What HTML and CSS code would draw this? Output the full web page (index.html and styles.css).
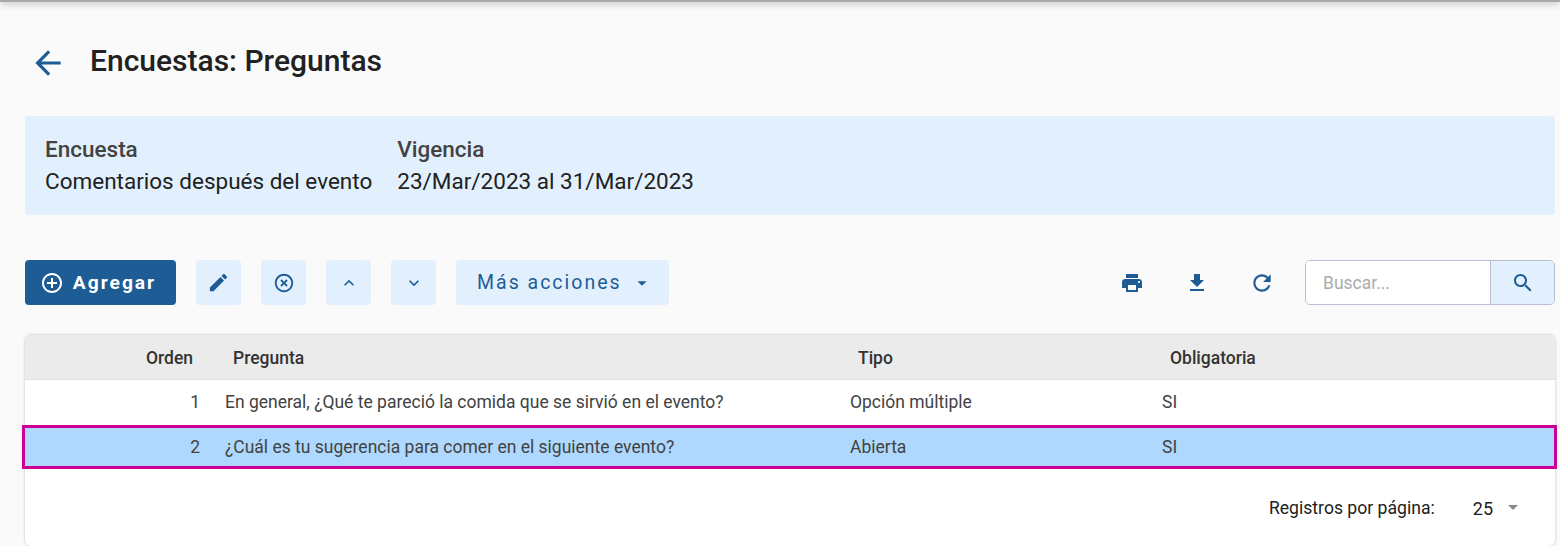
FILE: index.html
```html
<!DOCTYPE html>
<html lang="es">
<head>
<meta charset="utf-8">
<title>Encuestas: Preguntas</title>
<link rel="stylesheet" href="styles.css">
</head>
<body>
<div class="topbar"></div>
<main class="page">
  <header class="page-head">
    <svg class="back" viewBox="0 0 24 24"><path d="M20 11H7.83l5.59-5.59L12 4l-8 8 8 8 1.41-1.41L7.83 13H20v-2z"/></svg>
    <h1>Encuestas: Preguntas</h1>
  </header>
  <section class="info">
    <div class="info-col">
      <div class="info-label">Encuesta</div>
      <div class="info-value">Comentarios después del evento</div>
    </div>
    <div class="info-col">
      <div class="info-label">Vigencia</div>
      <div class="info-value">23/Mar/2023 al 31/Mar/2023</div>
    </div>
  </section>
  <section class="toolbar">
    <button class="btn btn-primary">
      <svg class="ic-add" viewBox="0 0 24 24"><path d="M13 7h-2v4H7v2h4v4h2v-4h4v-2h-4V7zm-1-5C6.48 2 2 6.48 2 12s4.48 10 10 10 10-4.48 10-10S17.52 2 12 2zm0 18c-4.41 0-8-3.59-8-8s3.59-8 8-8 8 3.59 8 8-3.59 8-8 8z"/></svg>
      Agregar
    </button>
    <button class="btn btn-icon"><svg class="ic-23" viewBox="0 0 24 24"><path d="M3 17.25V21h3.75L17.81 9.94l-3.75-3.75L3 17.25zM20.71 7.04c.39-.39.39-1.02 0-1.41l-2.34-2.34c-.39-.39-1.02-.39-1.41 0l-1.83 1.83 3.75 3.75 1.83-1.83z"/></svg></button>
    <button class="btn btn-icon"><svg class="ic-22" viewBox="0 0 24 24"><path d="M14.59 8L12 10.59 9.41 8 8 9.41 10.59 12 8 14.59 9.41 16 12 13.41 14.59 16 16 14.59 13.41 12 16 9.41 14.59 8zM12 2C6.47 2 2 6.47 2 12s4.47 10 10 10 10-4.47 10-10S17.53 2 12 2zm0 18c-4.41 0-8-3.59-8-8s3.59-8 8-8 8 3.59 8 8-3.59 8-8 8z"/></svg></button>
    <button class="btn btn-icon"><svg class="ic-20" viewBox="0 0 24 24"><path d="M12 8l-6 6 1.41 1.41L12 10.83l4.59 4.58L18 14z"/></svg></button>
    <button class="btn btn-icon"><svg class="ic-20" viewBox="0 0 24 24"><path d="M16.59 8.59L12 13.17 7.41 8.59 6 10l6 6 6-6z"/></svg></button>
    <button class="btn btn-more">
      <span class="btn-more-label">Más acciones</span>
      <svg class="ic-22" viewBox="0 0 24 24"><path d="M7 10l5 5 5-5z"/></svg>
    </button>
    <div class="toolbar-right">
      <div class="tools">
        <svg class="ic-24" viewBox="0 0 24 24"><path d="M19 8H5c-1.66 0-3 1.34-3 3v6h4v4h12v-4h4v-6c0-1.66-1.34-3-3-3zm-3 11H8v-5h8v5zm3-7c-.55 0-1-.45-1-1s.45-1 1-1 1 .45 1 1-.45 1-1 1zm-1-9H6v4h12V3z"/></svg>
        <svg class="ic-24" viewBox="0 0 24 24"><path d="M19 9h-4V3H9v6H5l7 7 7-7zM5 18v2h14v-2H5z"/></svg>
        <svg class="ic-refresh" viewBox="0 0 24 24"><path d="M17.65 6.35C16.2 4.9 14.21 4 12 4c-4.42 0-7.99 3.58-7.99 8s3.57 8 7.99 8c3.73 0 6.84-2.55 7.73-6h-2.08c-.82 2.33-3.04 4-5.65 4-3.31 0-6-2.69-6-6s2.69-6 6-6c1.66 0 3.14.69 4.22 1.78L13 11h7V4l-2.35 2.35z"/></svg>
      </div>
      <div class="search">
        <div class="search-input">Buscar...</div>
        <div class="search-btn"><svg class="ic-24" viewBox="0 0 24 24"><path d="M15.5 14h-.79l-.28-.27C15.41 12.59 16 11.11 16 9.5 16 5.91 13.09 3 9.5 3S3 5.91 3 9.5 5.91 16 9.5 16c1.61 0 3.09-.59 4.23-1.57l.27.28v.79l5 4.99L20.49 19l-4.99-5zm-6 0C7.01 14 5 11.99 5 9.5S7.01 5 9.5 5 14 7.01 14 9.5 11.99 14 9.5 14z"/></svg></div>
      </div>
    </div>
  </section>
  <section class="card">
    <div class="row row-head">
      <div class="cell num">Orden</div>
      <div class="cell">Pregunta</div>
      <div class="cell">Tipo</div>
      <div class="cell">Obligatoria</div>
    </div>
    <div class="row row-body row-first">
      <div class="cell num">1</div>
      <div class="cell">En general, ¿Qué te pareció la comida que se sirvió en el evento?</div>
      <div class="cell">Opción múltiple</div>
      <div class="cell">SI</div>
    </div>
    <div class="row row-body row-selected">
      <div class="cell num">2</div>
      <div class="cell">¿Cuál es tu sugerencia para comer en el siguiente evento?</div>
      <div class="cell">Abierta</div>
      <div class="cell">SI</div>
    </div>
    <footer class="pager">
      <span>Registros por página:</span>
      <span class="pager-size">25</span>
      <svg class="ic-24 pager-arrow" viewBox="0 0 24 24"><path d="M7 10l5 5 5-5z"/></svg>
    </footer>
  </section>
</main>
</body>
</html>
```

FILE: styles.css
```css
* { box-sizing: border-box; }
html, body { margin: 0; height: 546px; overflow: hidden; }
body {
  background: #fafafa;
  font-family: Roboto, "Liberation Sans", sans-serif;
  color: #212121;
}
svg { display: block; fill: currentColor; flex: none; }
.topbar {
  height: 2px;
  background: #a8a8a8;
  box-shadow: 0 1px 7px rgba(0, 0, 0, .5);
}
.page { padding: 0 5px 0 25px; }
.page-head {
  display: flex;
  align-items: center;
  height: 114px;
  padding-top: 8px;
}
.back {
  width: 38px;
  height: 38px;
  margin-left: 4px;
  margin-right: 23px;
  color: #1e5c96;
}
h1 {
  margin: 0 0 5px;
  font-size: 30px;
  font-weight: 500;
  line-height: 36px;
  color: #212121;
}
.info {
  display: flex;
  gap: 25px;
  height: 99px;
  padding: 17px 20px 0;
  background: #e2f0fe;
  border-radius: 4px;
  font-size: 22.5px;
  line-height: 32px;
}
.info-label { font-weight: 500; color: #424242; }
.info-value { color: #212121; }
.toolbar {
  display: flex;
  align-items: center;
  gap: 20px;
  height: 45px;
  margin-top: 45px;
}
.btn {
  display: flex;
  align-items: center;
  justify-content: center;
  height: 45px;
  padding: 0;
  border: 0;
  border-radius: 4px;
  font-family: inherit;
  font-size: 19.5px;
  line-height: 24px;
  letter-spacing: 2px;
  color: #1e5c96;
  background: #e2f0fe;
}
.btn-primary {
  width: 151px;
  gap: 9px;
  padding-right: 5px;
  font-size: 19.2px;
  font-weight: 700;
  background: #1e5c96;
  color: #fff;
}
.ic-add { width: 24px; height: 24px; }
.btn-icon { width: 45px; }
.btn-more {
  justify-content: flex-start;
  width: 213px;
  gap: 9px;
  padding-left: 21px;
  font-weight: 400;
}
.btn-more-label { padding-top: 1px; }
.ic-24 { width: 24px; height: 24px; }
.ic-23 { width: 23px; height: 23px; }
.ic-22 { width: 22px; height: 22px; }
.ic-20 { width: 20px; height: 20px; }
.ic-refresh { width: 26px; height: 26px; margin: -1px; }
.toolbar-right {
  display: flex;
  align-items: center;
  margin-left: auto;
}
.tools {
  display: flex;
  gap: 41px;
  margin-right: 31px;
  color: #1e5c96;
}
.search {
  display: flex;
  width: 250px;
  height: 45px;
  border: 1px solid #bcbcd4;
  border-radius: 5px;
  overflow: hidden;
}
.search-input {
  flex: 1;
  padding-left: 17px;
  background: #fff;
  color: #ababab;
  font-size: 17.5px;
  line-height: 44px;
}
.search-btn {
  display: flex;
  align-items: center;
  justify-content: center;
  width: 64px;
  background: #e2f0fe;
  border-left: 1px solid #bcbcd4;
  color: #1e5c96;
}
.card {
  height: 211px;
  margin-top: 30px;
  background: #fff;
  border-radius: 6px;
  box-shadow: 0 0 3px rgba(0, 0, 0, .25);
}
.row {
  display: grid;
  grid-template-columns: 192px 625px 312px 1fr;
  align-items: center;
  font-size: 17.5px;
}
.row-head {
  height: 45px;
  padding-top: 1px;
  background: #ebebeb;
  border-bottom: 1px solid #dedede;
  border-radius: 6px 6px 0 0;
  font-weight: 500;
  color: #333;
}
.row-head .cell { padding: 0 16px; }
.row-head .num { padding-right: 24px; }
.row-body {
  height: 45px;
  color: #424242;
}
.row-body .cell { padding: 0 8px; }
.row-body .num { padding-right: 17px; }
.row-first { padding-bottom: 1px; }
.num { text-align: right; }
.row-selected {
  position: relative;
  height: 44px;
  background: #aed8fd;
}
.row-selected::after {
  content: "";
  position: absolute;
  inset: 0 -2px 0 -3px;
  border: 3px solid #cc0099;
}
.pager {
  display: flex;
  align-items: center;
  justify-content: flex-end;
  height: 78px;
  padding-right: 30px;
  font-size: 17.6px;
  font-weight: 400;
  color: #212121;
}
.pager-size { margin-left: 38px; font-size: 18px; margin-right: 8px; }
.pager-arrow { color: #8a8a8a; margin-top: -3px; }
```
